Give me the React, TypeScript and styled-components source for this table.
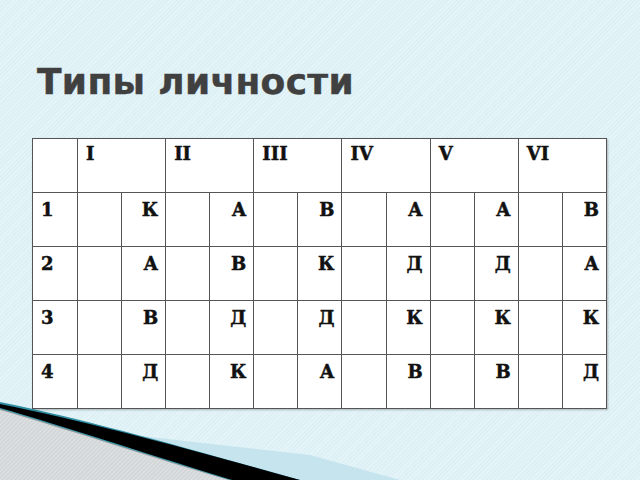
import React from "react";
import styled, { createGlobalStyle } from "styled-components";

const Global = createGlobalStyle`
  html, body { margin: 0; padding: 0; }
  body { width: 640px; height: 480px; overflow: hidden; }
`;

const Slide = styled.div`
  position: relative;
  width: 640px;
  height: 480px;
  overflow: hidden;
  box-sizing: border-box;
  padding: 60px 0 0 32px;
  background-color: #dcf0f5;
  background-image: repeating-linear-gradient(
    135deg,
    rgba(255, 255, 255, 0.35) 0px,
    rgba(255, 255, 255, 0.35) 1px,
    rgba(255, 255, 255, 0) 1px,
    rgba(255, 255, 255, 0) 3px
  );
  font-family: "DejaVu Serif", serif;
`;

const Title = styled.h1`
  position: relative;
  z-index: 1;
  margin: 0 0 0 5px;
  font-family: "DejaVu Sans", Verdana, sans-serif;
  font-weight: bold;
  font-size: 36px;
  line-height: 44px;
  color: #404040;
  letter-spacing: 0.3px;
  -webkit-text-stroke: 0.4px #404040;
`;

const Grid = styled.table`
  position: relative;
  z-index: 1;
  margin-top: 34px;
  border-collapse: collapse;
  table-layout: fixed;
  width: 575px;
  background: #fff;
  box-shadow: 1px 1px 2px rgba(0, 0, 0, 0.25);
`;

const Cell = styled.td<{ $right?: boolean; $head?: boolean }>`
  border: 1.5px solid #555;
  height: 54px;
  padding: ${(p) => (p.$head ? "4px 8px 0" : "6px 7px 0 8px")};
  vertical-align: top;
  text-align: ${(p) => (p.$right ? "right" : "left")};
  font-family: "DejaVu Serif", "Liberation Serif", serif;
  font-weight: bold;
  font-size: 18px;
  line-height: 22px;
  color: #111;
  -webkit-text-stroke: 0.5px #111;
  box-sizing: border-box;
`;

const Deco = styled.svg`
  position: absolute;
  left: 0;
  bottom: 0;
  width: 640px;
  height: 100px;
  z-index: 0;
`;

const heads = ["I", "II", "III", "IV", "V", "VI"];
const rows = [
  ["К", "А", "В", "А", "А", "В"],
  ["А", "В", "К", "Д", "Д", "А"],
  ["В", "Д", "Д", "К", "К", "К"],
  ["Д", "К", "А", "В", "В", "Д"],
];

export default function App() {
  return (
    <>
      <Global />
      <Slide>
        <Deco viewBox="0 380 640 100">
          <defs>
            <pattern id="hatch" width="3" height="3" patternUnits="userSpaceOnUse" patternTransform="rotate(45)">
              <rect width="3" height="3" fill="#d2d6d8" />
              <rect width="1" height="3" fill="#e0e3e4" />
            </pattern>
          </defs>
          <polygon points="0,420 150,437 310,455 400,480 0,480" fill="#c6e4ee" />
          <path d="M0,402 C90,420 200,452 300,480 L0,480 Z" fill="#2f8ea3" />
          <path d="M0,404 C90,422 200,452 300,480 L0,480 Z" fill="#000" />
          <path d="M0,408 C60,425 150,455 232,480 L0,480 Z" fill="#3a9cb0" />
          <path d="M0,409 C60,426 150,456 230,480 L0,480 Z" fill="#9a9c9d" />
          <path d="M0,410 C60,427 150,457 228,480 L0,480 Z" fill="url(#hatch)" />
        </Deco>
        <Title>Типы личности</Title>
        <Grid>
          <colgroup>
            <col style={{ width: 45 }} />
            {Array.from({ length: 12 }).map((_, i) => (
              <col key={i} />
            ))}
          </colgroup>
          <tbody>
            <tr>
              <Cell $head />
              {heads.map((h) => (
                <Cell key={h} $head colSpan={2}>
                  {h}
                </Cell>
              ))}
            </tr>
            {rows.map((r, i) => (
              <tr key={i}>
                <Cell>{i + 1}</Cell>
                {r.map((l, j) => (
                  <React.Fragment key={j}>
                    <Cell />
                    <Cell $right>{l}</Cell>
                  </React.Fragment>
                ))}
              </tr>
            ))}
          </tbody>
        </Grid>
      </Slide>
    </>
  );
}
